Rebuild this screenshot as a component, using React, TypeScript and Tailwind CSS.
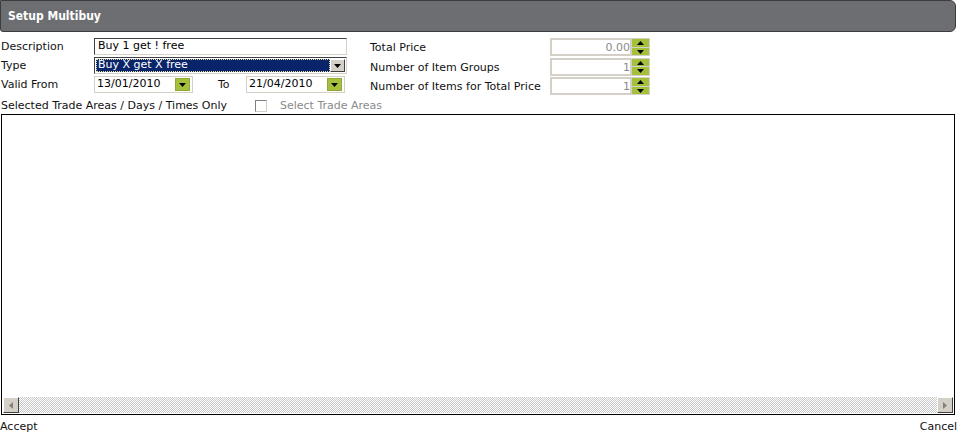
import { useState } from "react"

function Arrow({ dir }: { dir: "up" | "down" | "left" | "right" }) {
    const pts = {
        up: "0,4 3.5,0 7,4",
        down: "0,0 7,0 3.5,4",
        left: "4,0 4,7 0,3.5",
        right: "0,0 0,7 4,3.5",
    }[dir]
    const vertical = dir === "up" || dir === "down"
    return (
        <svg width={vertical ? 7 : 4} height={vertical ? 4 : 7} viewBox={vertical ? "0 0 7 4" : "0 0 4 7"}>
            <polygon points={pts} fill={dir === "left" || dir === "right" ? "#808080" : "#000"} />
        </svg>
    )
}

function DateBox({ value }: { value: string }) {
    return (
        <div className="flex items-center w-[99px] h-[17px] border border-[#d4d0c8] bg-white pl-[2px] pr-[2px]">
            <span className="flex-1 text-black">{value}</span>
            <span className="flex items-center justify-center w-[15px] h-[13px] bg-[#a4c03c] border border-[#8fa833]">
                <Arrow dir="down" />
            </span>
        </div>
    )
}

function Spinner({ value }: { value: string }) {
    return (
        <div className="flex h-[18px]">
            <div className="w-[82px] h-full border-2 border-[#d4d0c8] bg-white text-right text-[#8a8a8a] leading-[15px]">{value}</div>
            <div className="w-[18px] h-full flex flex-col bg-[#d4d0c8] py-[1px] pr-[1px] gap-[1px]">
                <span className="flex-1 flex items-center justify-center bg-[#a4c03c]"><Arrow dir="up" /></span>
                <span className="flex-1 flex items-center justify-center bg-[#a4c03c]"><Arrow dir="down" /></span>
            </div>
        </div>
    )
}

export default function App() {
    const [description] = useState("Buy 1 get ! free")

    return (
        <div className="w-[959px] h-[432px] bg-white flex flex-col font-['DejaVu_Sans',Verdana,sans-serif] text-[11px] text-[#111] overflow-hidden">
            <div className="h-[32px] shrink-0 mr-[3px] flex items-center px-[7px] bg-[#6d6e71] border border-[#3c3c3c] rounded-r-[6px] rounded-bl-[3px]">
                <span className="text-white font-bold text-[12px] font-['DejaVu_Sans_Condensed','DejaVu_Sans',sans-serif]">Setup Multibuy</span>
            </div>

            <div className="flex mt-[6px]">
                <div className="w-[370px] flex flex-col gap-[2px]">
                    <div className="flex items-center h-[17px]">
                        <label className="w-[94px] pl-[1px] pt-[2px]">Description</label>
                        <div className="w-[253px] h-[17px] flex items-center px-[3px] bg-white border border-t-[#404040] border-l-[#404040] border-b-[#d4d0c8] border-r-[#d4d0c8] text-black">{description}</div>
                    </div>
                    <div className="flex items-center h-[17px]">
                        <label className="w-[94px] pl-[1px] pt-[2px]">Type</label>
                        <div className="w-[253px] h-[17px] flex border border-t-[#404040] border-l-[#404040] border-b-[#d4d0c8] border-r-[#d4d0c8] bg-white p-[1px]">
                            <div className="flex-1 flex items-center bg-[#0a246a] text-white pl-[2px] outline-1 outline-dotted outline-[#e8e0a0] -outline-offset-1">Buy X get X free</div>
                            <span className="w-[15px] flex items-center justify-center bg-[#d4d0c8] border border-t-white border-l-white border-b-[#404040] border-r-[#404040]"><Arrow dir="down" /></span>
                        </div>
                    </div>
                    <div className="flex items-center h-[17px]">
                        <label className="w-[94px] pl-[1px] pt-[2px]">Valid From</label>
                        <DateBox value="13/01/2010" />
                        <span className="w-[53px] pl-[25px] pt-[2px]">To</span>
                        <DateBox value="21/04/2010" />
                    </div>
                </div>
                <div className="flex flex-col gap-[1px]">
                    <div className="flex items-center">
                        <label className="w-[180px] pt-[2px]">Total Price</label>
                        <Spinner value="0.00" />
                    </div>
                    <div className="flex items-center">
                        <label className="w-[180px] pt-[2px]">Number of Item Groups</label>
                        <Spinner value="1" />
                    </div>
                    <div className="flex items-center">
                        <label className="w-[180px] pt-[2px]">Number of Items for Total Price</label>
                        <Spinner value="1" />
                    </div>
                </div>
            </div>

            <div className="flex items-center h-[17px] mt-[2px] pl-[1px]">
                <span className="w-[254px]">Selected Trade Areas / Days / Times Only</span>
                <span className="w-[12px] h-[12px] border border-[#808080] border-b-[#d4d0c8] border-r-[#d4d0c8] bg-white"></span>
                <span className="ml-[13px] text-[#8a8a8a]">Select Trade Areas</span>
            </div>

            <div className="ml-[1px] w-[954px] h-[301px] shrink-0 border border-black flex flex-col">
                <div className="flex-1 bg-white"></div>
                <div className="h-[16px] flex mx-[1px] mb-[1px] bg-[conic-gradient(#c8c8c8_25%,#ffffff_0_50%,#c8c8c8_0_75%,#ffffff_0)] bg-[length:2px_2px]">
                    <span className="w-[16px] h-full flex items-center justify-center bg-[#d4d0c8] border border-t-white border-l-white border-b-[#404040] border-r-[#404040]"><Arrow dir="left" /></span>
                    <span className="flex-1"></span>
                    <span className="w-[16px] h-full flex items-center justify-center bg-[#d4d0c8] border border-t-white border-l-white border-b-[#404040] border-r-[#404040]"><Arrow dir="right" /></span>
                </div>
            </div>

            <div className="flex justify-between items-center h-[17px] mt-[4px] pr-[2px]">
                <span>Accept</span>
                <span>Cancel</span>
            </div>
        </div>
    )
}
